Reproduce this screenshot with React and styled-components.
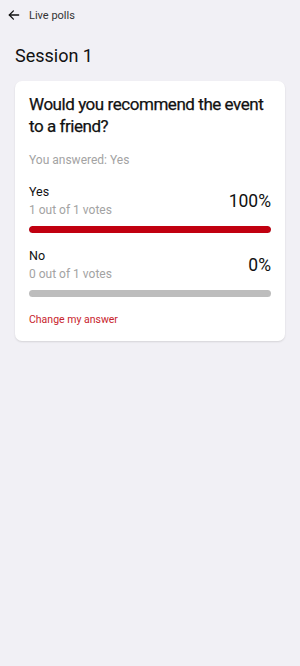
import React from "react";
import styled, { createGlobalStyle } from "styled-components";

const Global = createGlobalStyle`
  html, body { margin: 0; padding: 0; background: #f1f0f5; }
  body { font-family: Roboto, "Noto Sans", sans-serif; -webkit-font-smoothing: antialiased; }
  #root { min-height: 666px; background: #f1f0f5; }
`;

const Page = styled.div`
  width: 300px;
  min-height: 666px;
  background: #f1f0f5;
  display: flex;
  flex-direction: column;
`;

const TopBar = styled.div`
  height: 30px;
  display: flex;
  align-items: center;
  gap: 8px;
  padding-left: 7px;
`;

const BackButton = styled.button`
  border: none;
  background: none;
  padding: 0;
  display: flex;
  align-items: center;
  color: #111;
`;

const TopTitle = styled.span`
  font-size: 11px;
  color: #333;
`;

const Heading = styled.h1`
  margin: 14px 15px 13px;
  font-size: 18px;
  line-height: 24px;
  font-weight: 400;
  color: #111;
`;

const Card = styled.section`
  margin: 0 15px;
  background: #fff;
  border-radius: 7px;
  box-shadow: 0 1px 2px rgba(0, 0, 0, 0.12);
  padding: 12px 14px 14px;
  display: flex;
  flex-direction: column;
`;

const Question = styled.h2`
  margin: 0;
  font-size: 17px;
  line-height: 22px;
  font-weight: 400;
  letter-spacing: -0.45px;
  -webkit-text-stroke: 0.25px #111;
  color: #111;
`;

const Answered = styled.div`
  margin-top: 15px;
  font-size: 12px;
  line-height: 16px;
  color: #a3a3a3;
`;

const Option = styled.div`
  margin-top: ${(p) => p.$top}px;
  display: flex;
  flex-direction: column;
`;

const OptionHead = styled.div`
  display: flex;
  align-items: center;
  justify-content: space-between;
`;

const OptionText = styled.div`
  display: flex;
  flex-direction: column;
`;

const Label = styled.span`
  font-size: 12.5px;
  line-height: 18px;
  color: #111;
`;

const Votes = styled.span`
  font-size: 12px;
  line-height: 18px;
  color: #a3a3a3;
`;

const Percent = styled.span`
  font-size: 17.5px;
  font-weight: 400;
  color: #111;
`;

const Track = styled.div`
  margin-top: 7px;
  height: 7px;
  border-radius: 4px;
  background: #bdbdbd;
  overflow: hidden;
`;

const Fill = styled.div`
  height: 100%;
  border-radius: 4px;
  background: #c10010;
`;

const ChangeLink = styled.button`
  margin-top: 16px;
  align-self: flex-start;
  border: none;
  background: none;
  padding: 0;
  font-family: inherit;
  font-size: 10.5px;
  line-height: 14px;
  color: #c8232c;
`;

const options = [
  { label: "Yes", votes: 1, total: 1, top: 15 },
  { label: "No", votes: 0, total: 1, top: 14 },
];

export default function App() {
  return (
    <Page>
      <Global />
      <TopBar>
        <BackButton aria-label="Back">
          <svg width="14" height="14" viewBox="0 0 24 24" fill="none" stroke="currentColor" strokeWidth="2.2" strokeLinecap="round" strokeLinejoin="round">
            <path d="M20 12H4" />
            <path d="M11 5l-7 7 7 7" />
          </svg>
        </BackButton>
        <TopTitle>Live polls</TopTitle>
      </TopBar>
      <Heading>Session 1</Heading>
      <Card>
        <Question>Would you recommend the event to a friend?</Question>
        <Answered>You answered: Yes</Answered>
        {options.map((o) => {
          const pct = Math.round((o.votes / o.total) * 100);
          return (
            <Option key={o.label} $top={o.top}>
              <OptionHead>
                <OptionText>
                  <Label>{o.label}</Label>
                  <Votes>{o.votes} out of {o.total} votes</Votes>
                </OptionText>
                <Percent>{pct}%</Percent>
              </OptionHead>
              <Track>
                <Fill style={{ width: `${pct}%` }} />
              </Track>
            </Option>
          );
        })}
        <ChangeLink>Change my answer</ChangeLink>
      </Card>
    </Page>
  );
}
